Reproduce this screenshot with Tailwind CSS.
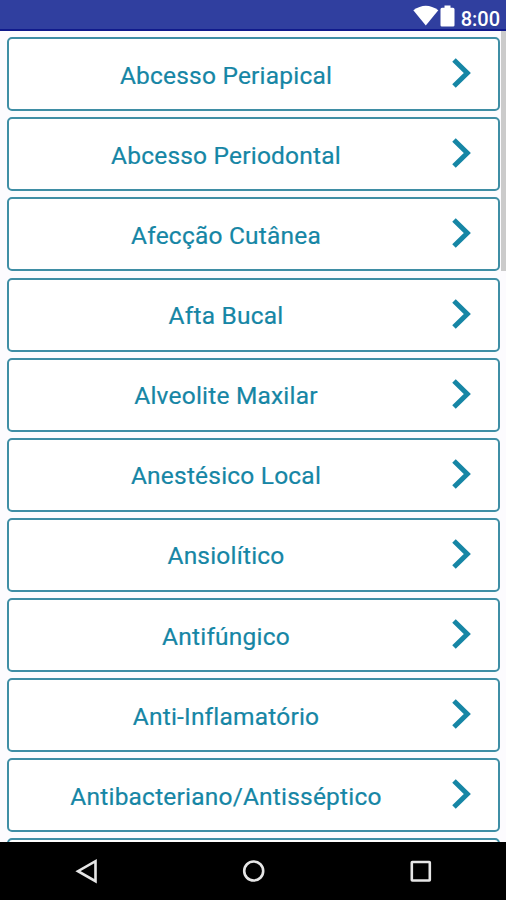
<!DOCTYPE html>
<html lang="pt">
<head>
<meta charset="utf-8">
<title>Lista</title>
<script src="https://cdn.jsdelivr.net/npm/@tailwindcss/browser@4"></script>
</head>
<body class="w-[506px] h-[900px] overflow-hidden bg-[#fcfbfe] font-[Roboto,sans-serif] flex flex-col">
<header class="h-[31px] shrink-0 bg-[#303f9f] border-b-2 border-[#101a8c] flex justify-end items-start pr-[6px]">
  <svg class="w-[26px] h-[22px] mt-[5px] mr-[1px] shrink-0" viewBox="0 0 26 22" fill="#fff"><path d="M.3 5.300Q12.800-3.700 25.300 5.300L12.800 20.500Z"/></svg>
  <svg class="w-[15px] h-[22px] mt-[5px] mr-[6px] shrink-0" viewBox="0 0 15 22" fill="#fff"><path d="M4.500.5h6v2.200h2.500a1.500 1.500 0 0 1 1.500 1.500v16a1.300 1.300 0 0 1-1.300 1.300H1.800A1.300 1.300 0 0 1 .5 20.200v-16a1.500 1.500 0 0 1 1.500-1.500h2.500z"/></svg>
  <span class="text-[20px] leading-[24px] mt-[7px] font-medium text-white">8:00</span>
</header>
<main class="relative h-[811px] shrink-0 overflow-hidden pt-[6.200px] pl-[6.500px] pr-[6px]">
  <ul id="list" class="flex flex-col gap-[6.130px]"></ul>
  <div class="absolute right-0 top-0 w-[5px] h-[240px] bg-[#cbcbcb]"></div>
</main>
<nav class="h-[58px] shrink-0 bg-black">
  <svg class="w-full h-full" viewBox="0 0 506 58" fill="none" stroke="#e6e6e6" stroke-width="2.600"><path d="M95.500 19.200v20L78 29.200z"/><circle cx="253.700" cy="29" r="9.500"/><rect x="411.800" y="20" width="18" height="18.500" rx=".5"/></svg>
</nav>
<template id="row">
  <li class="h-[74px] shrink-0 rounded-[5px] border-2 border-[#3f8ea5] bg-white flex items-center">
    <span class="w-[435px] text-center text-[24.500px] leading-[30px] tracking-[0.200px] text-[#1686a5] [-webkit-text-stroke:0.200px_#1686a5] whitespace-nowrap pt-[3px]"></span>
    <svg class="w-[22px] h-[34px] ml-[7px] -mt-[2px] shrink-0" viewBox="0 0 22 34" fill="none" stroke="#1686a5" stroke-width="5"><path d="M3 4l13.300 13L3 30"/></svg>
  </li>
</template>
<script>
const names = ["Abcesso Periapical","Abcesso Periodontal","Afecção Cutânea","Afta Bucal","Alveolite Maxilar","Anestésico Local","Ansiolítico","Antifúngico","Anti-Inflamatório","Antibacteriano/Antisséptico",""];
const list = document.getElementById("list"), row = document.getElementById("row");
for (const name of names) {
  const item = row.content.cloneNode(true);
  item.querySelector("span").textContent = name;
  list.append(item);
}
</script>
</body>
</html>
